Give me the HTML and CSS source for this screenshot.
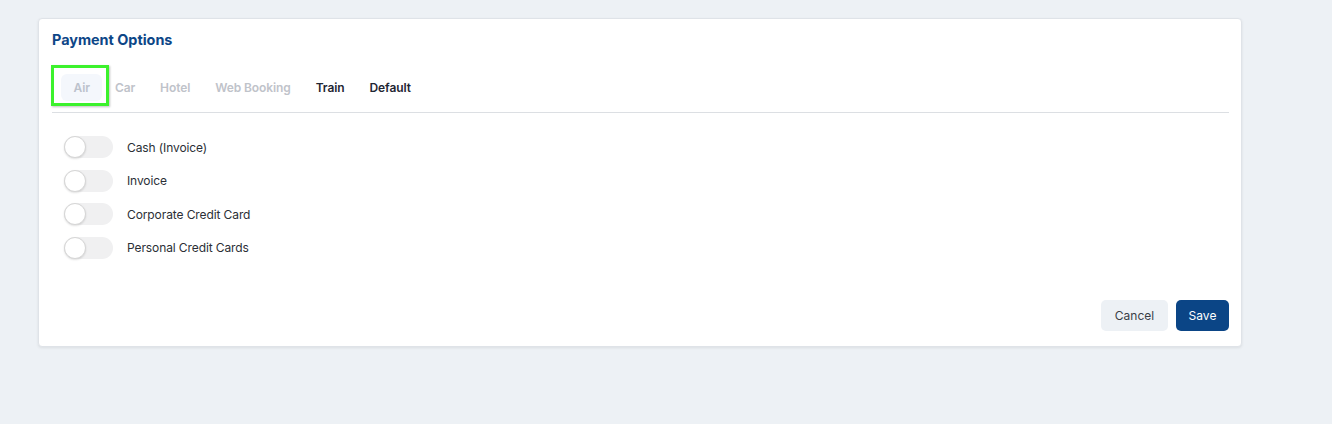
FILE: index.html
```html
<!DOCTYPE html>
<html lang="en">
<head>
<meta charset="utf-8">
<title>Payment Options</title>
<link rel="stylesheet" href="styles.css">
</head>
<body>
<section class="card">
  <h2 class="card-title">Payment Options</h2>
  <nav class="tabs">
    <span class="tab tab-active">Air</span>
    <span class="tab tab-muted">Car</span>
    <span class="tab tab-muted">Hotel</span>
    <span class="tab tab-muted">Web Booking</span>
    <span class="tab">Train</span>
    <span class="tab">Default</span>
  </nav>
  <ul class="options">
    <li class="option"><span class="switch"><span class="knob"></span></span><span class="label">Cash (Invoice)</span></li>
    <li class="option"><span class="switch"><span class="knob"></span></span><span class="label">Invoice</span></li>
    <li class="option"><span class="switch"><span class="knob"></span></span><span class="label">Corporate Credit Card</span></li>
    <li class="option"><span class="switch"><span class="knob"></span></span><span class="label">Personal Credit Cards</span></li>
  </ul>
  <div class="actions">
    <button class="btn btn-cancel">Cancel</button>
    <button class="btn btn-save">Save</button>
  </div>
</section>
</body>
</html>
```
FILE: styles.css
```css
* { box-sizing: border-box; }
html, body { margin: 0; }
body {
  background: #edf1f5;
  font-family: Inter, "Noto Sans", "Liberation Sans", sans-serif;
  padding: 18px 0 0 38px;
  height: 424px;
}
.card {
  width: 1204px;
  background: #fff;
  border: 1px solid #dfe3e8;
  border-radius: 4px;
  box-shadow: 0 1px 3px rgba(0,0,0,0.08);
  padding: 11px 12px 15px 13px;
}
.card-title {
  margin: 0;
  font-size: 14.4px;
  line-height: 20px;
  font-weight: 700;
  color: #0d4687;
}
.tabs {
  display: flex;
  margin-top: 24px;
  padding: 0 0 11px 9px;
  border-bottom: 1px solid #dcdfe3;
}
.tab {
  position: relative;
  display: flex;
  align-items: center;
  height: 27px;
  padding: 0 12.5px;
  font-size: 12px;
  font-weight: 600;
  letter-spacing: -0.1px;
  color: #1f2633;
  border-radius: 6px;
}
.tab-muted { color: #bfc3ca; }
.tab-active {
  color: #bcc2cc;
  background: #f4f7fc;
}
.tab-active::after {
  content: "";
  position: absolute;
  left: -10px;
  top: -9px;
  right: -7px;
  bottom: -5px;
  border: 3px solid #3cf22c;
  box-shadow: 1px 1px 2px rgba(0,0,0,0.25);
}
.options {
  list-style: none;
  margin: 23px 0 0;
  padding: 0 0 0 12px;
  display: flex;
  flex-direction: column;
  gap: 11.5px;
}
.option {
  display: flex;
  align-items: center;
  height: 22px;
}
.switch {
  position: relative;
  width: 49px;
  height: 22px;
  border-radius: 11px;
  background: #f0f0f1;
  flex: none;
}
.knob {
  position: absolute;
  left: 0;
  top: 0;
  width: 22px;
  height: 22px;
  border-radius: 50%;
  background: #fff;
  border: 1px solid #d6d6d6;
  box-shadow: 0 1px 2px rgba(0,0,0,0.12);
}
.label {
  margin-left: 14px;
  font-size: 12px;
  letter-spacing: -0.1px;
  color: #2b2f36;
}
.actions {
  display: flex;
  justify-content: flex-end;
  gap: 8px;
  margin-top: 41px;
}
.btn {
  height: 31px;
  border: none;
  border-radius: 5px;
  font-family: inherit;
  font-size: 12px;
  padding: 0 12px;
  cursor: pointer;
}
.btn-cancel {
  background: #edf1f5;
  color: #3a3f47;
  width: 67px;
}
.btn-save {
  background: #0b4586;
  color: #fff;
  width: 53px;
}
```
